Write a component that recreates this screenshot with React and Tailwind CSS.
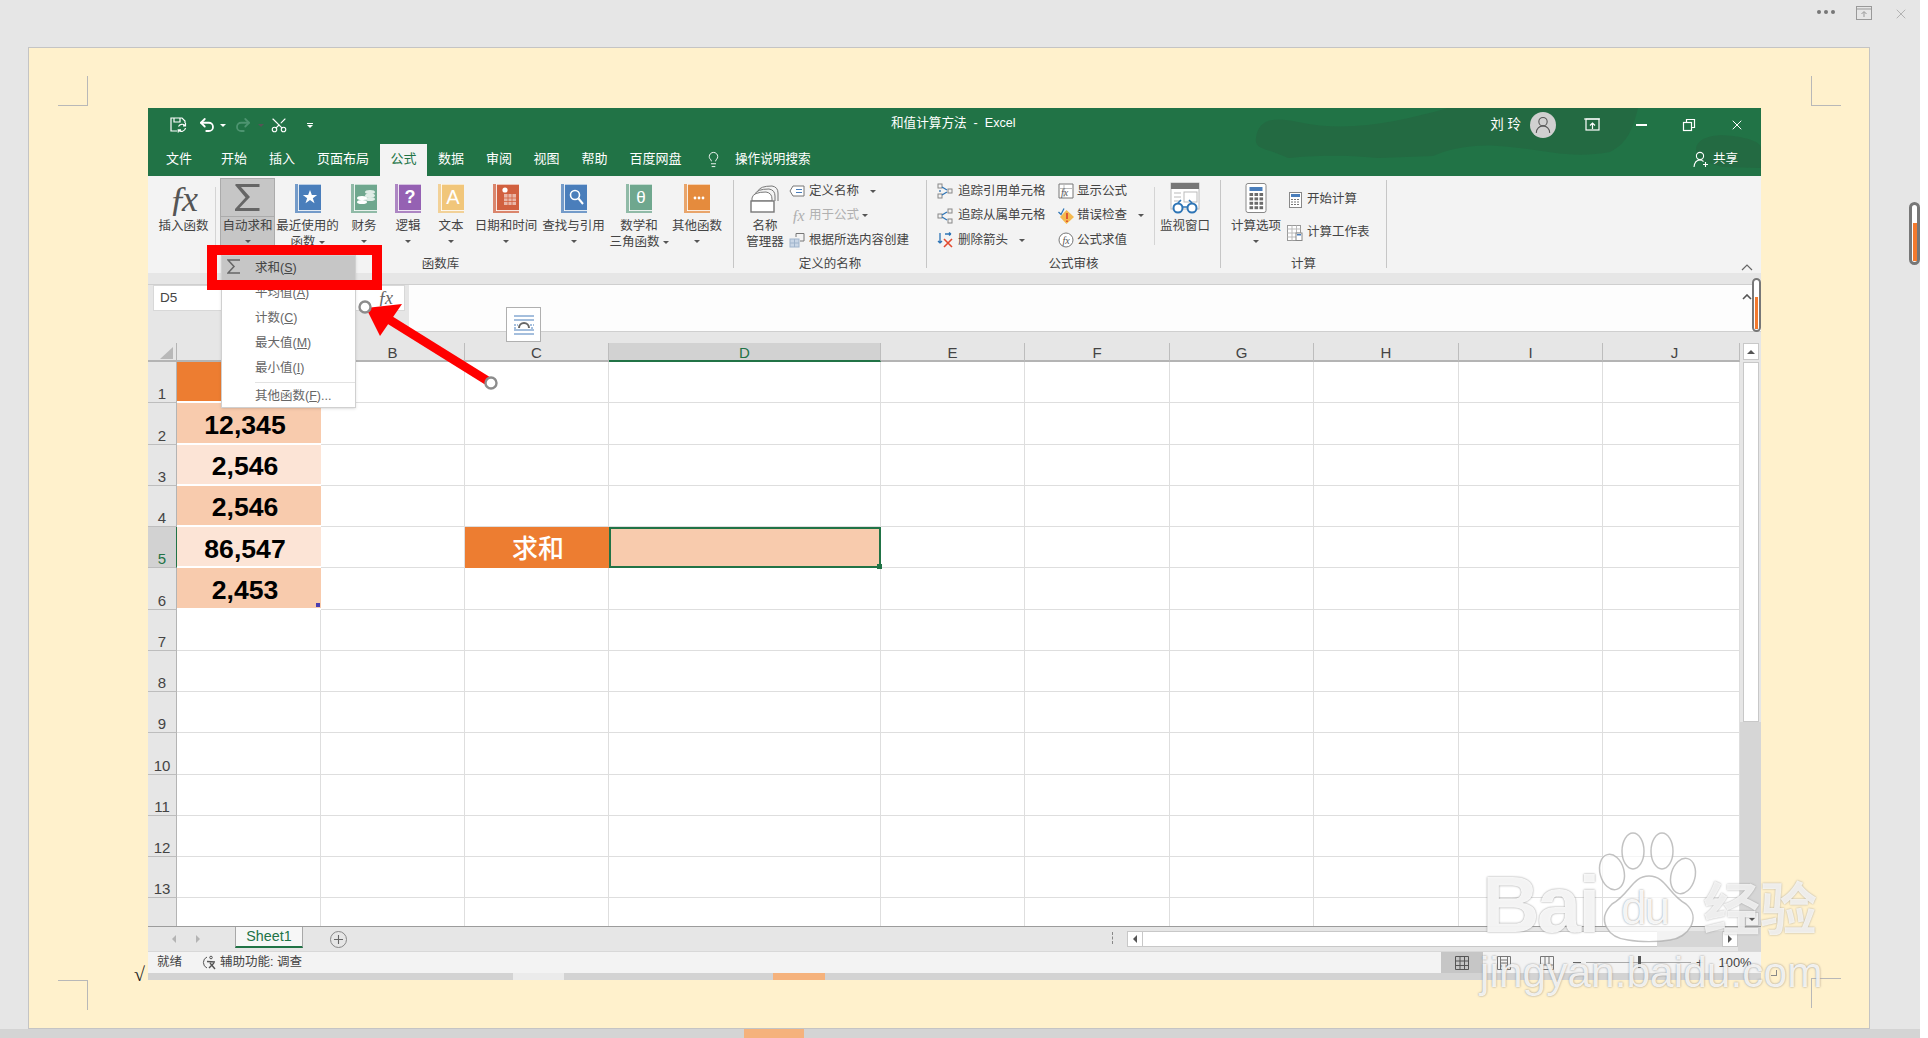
import { Undo2, Redo2, Scissors, Lightbulb, X, UserRound } from 'lucide-react';

const columns = [
    { name: 'A', w: 'w-[144px]' },
    { name: 'B', w: 'w-[144px]' },
    { name: 'C', w: 'w-[144px]' },
    { name: 'D', w: 'w-[272px]', selected: true },
    { name: 'E', w: 'w-[144px]' },
    { name: 'F', w: 'w-[145px]' },
    { name: 'G', w: 'w-[144px]' },
    { name: 'H', w: 'w-[145px]' },
    { name: 'I', w: 'w-[144px]' },
    { name: 'J', w: 'w-[137px] pl-[7px]' },
];

const rows = [
    { n: 1, a: '', bg: 'bg-[#ed7d31]' },
    { n: 2, a: '12,345', bg: 'bg-[#f8cbad]' },
    { n: 3, a: '2,546', bg: 'bg-[#fce4d6]' },
    { n: 4, a: '2,546', bg: 'bg-[#f8cbad]' },
    { n: 5, a: '86,547', bg: 'bg-[#fce4d6]', selected: true },
    { n: 6, a: '2,453', bg: 'bg-[#f8cbad]' },
    { n: 7 }, { n: 8 }, { n: 9 }, { n: 10 }, { n: 11 }, { n: 12 }, { n: 13 }, { n: 14 },
];

const tabs = [
    { label: '文件', w: 'w-[62px]' },
    { label: '开始', w: 'w-[48px]' },
    { label: '插入', w: 'w-[48px]' },
    { label: '页面布局', w: 'w-[74px]' },
    { label: '公式', w: 'w-[47px]', active: true },
    { label: '数据', w: 'w-[48px]' },
    { label: '审阅', w: 'w-[48px]' },
    { label: '视图', w: 'w-[47px]' },
    { label: '帮助', w: 'w-[49px]' },
    { label: '百度网盘', w: 'w-[73px]' },
];

function Caret({ className = '' }) {
    return <span className={`inline-block w-0 h-0 border-x-[3px] border-x-transparent border-t-[3px] border-t-[#555] ${className}`} />;
}

function Book({ color, children }) {
    return (
        <svg width="26" height="29" viewBox="0 0 26 29">
            <rect x="0" y="0" width="26" height="29" fill={color} opacity="0.75" />
            <rect x="4" y="1" width="22" height="25" fill={color} />
            <rect x="3" y="0" width="1" height="27" fill="#fff" opacity="0.8" />
            <rect x="3" y="26" width="23" height="1" fill="#fff" opacity="0.8" />
            <rect x="3" y="0" width="23" height="1" fill="#fff" opacity="0.5" />
            {children}
        </svg>
    );
}

function RibbonButton({ w, icon, lines, caret = true, inlineCaret = false, pad = '' }) {
    return (
        <div className={`${w} ${pad} shrink-0 flex flex-col items-center pt-[8px]`}>
            <div className="h-[29px] flex items-center justify-center">{icon}</div>
            <div className="mt-[5px] text-center text-[12.5px] leading-[16px] whitespace-nowrap text-[#444]">
                {lines.map((line, i) => (
                    <div key={line}>
                        {line}
                        {inlineCaret && i === lines.length - 1 && <Caret className="ml-[3px] mb-[2px]" />}
                    </div>
                ))}
            </div>
            {caret && <Caret className="mt-[6px]" />}
        </div>
    );
}

function SmallRow({ icon, label, box = 'w-[18px]', gap = 'ml-[3px]', caret, dim, h = 'h-[24.5px]' }) {
    return (
        <div className={`${h} flex items-center text-[12.5px] whitespace-nowrap ${dim ? 'text-[#b0b0b0]' : 'text-[#444]'}`}>
            <div className={`${box} flex justify-center shrink-0`}>{icon}</div>
            <span className={gap}>{label}</span>
            {caret && <Caret className={caret} />}
        </div>
    );
}

function GroupLabel({ children }) {
    return <div className="h-[16px] text-center text-[12.5px] leading-[16px] text-[#444] whitespace-nowrap">{children}</div>;
}

function Sep({ short }) {
    return <div className={short ? 'w-px h-[58px] mt-[11px] bg-[#d4d4d4] shrink-0' : 'w-px h-[88px] mt-[4px] bg-[#c6c6c6] shrink-0'} />;
}

function Icon16({ children }) {
    return <svg width="16" height="16" viewBox="0 0 16 16" fill="none">{children}</svg>;
}

function CalcKeys() {
    const keys = [];
    for (let r = 0; r < 4; r++) {
        for (let c = 0; c < 3; c++) {
            keys.push(<rect key={`${r}${c}`} x={4.5 + c * 5} y={10 + r * 4.4} width="3.6" height="3" fill="#6b6b6b" />);
        }
    }
    return keys;
}

function RibbonBar() {
    return (
        <div className="h-[97px] bg-[#f3f3f3] flex items-start relative">
            {/* 函数库 */}
            <div className="w-[585px] shrink-0 flex-none">
                <div className="h-[80px] flex items-start">
                    <div className="w-[67px] pl-[4px] shrink-0 flex flex-col items-center pt-[8px]">
                        <div className="h-[29px] flex items-center font-['Liberation_Serif',serif] italic text-[36px] tracking-[-5px] pr-[5px] leading-none text-[#555]">ƒx</div>
                        <div className="mt-[5px] text-[12.5px] leading-[16px] text-[#444]">插入函数</div>
                    </div>
                    <Sep short />
                    <div className="w-[4px] shrink-0" />
                    <div className="w-[55px] h-[77px] mt-[2px] shrink-0 flex flex-col border border-[#ababab] bg-[#c6c6c6]">
                        <div className="h-[38px] flex items-center justify-center border-b border-[#ababab]">
                            <svg width="25" height="27" viewBox="0 0 25 27">
                                <path d="M1 0 H24.5 V3 H6 L15 13 L4.5 24 H24.5 V27 H0 V25 L10.5 13.5 L0 1z" fill="#666" />
                            </svg>
                        </div>
                        <div className="text-center text-[12.5px] leading-[16px] pt-[1px] whitespace-nowrap text-[#444]">自动求和</div>
                        <div className="flex justify-center mt-[6px]"><Caret /></div>
                    </div>
                    <RibbonButton w="w-[65px]" caret={false} inlineCaret lines={['最近使用的', '函数']} icon={
                        <Book color="#4a7ebb"><path d="M15 5 l1.9 5.2 h5.4 l-4.4 3.2 1.7 5.3 -4.6 -3.3 -4.6 3.3 1.7 -5.3 -4.4 -3.2 h5.4z" fill="#fff" transform="translate(0.3 1) scale(0.98)" /></Book>
                    } />
                    <RibbonButton w="w-[48px]" lines={['财务']} icon={
                        <Book color="#6fa78e">
                            <ellipse cx="19" cy="8" rx="5" ry="2" fill="#dfece6" />
                            <ellipse cx="19" cy="11.5" rx="5" ry="2" fill="#dfece6" />
                            <ellipse cx="19" cy="15" rx="5" ry="2" fill="#dfece6" />
                            <ellipse cx="11" cy="14" rx="5" ry="2" fill="#fff" />
                            <ellipse cx="11" cy="18" rx="5" ry="2" fill="#fff" />
                        </Book>
                    } />
                    <RibbonButton w="w-[40px]" lines={['逻辑']} icon={
                        <Book color="#9561b3"><text x="15" y="19" textAnchor="middle" fontSize="18" fontWeight="700" fill="#fff" fontFamily="Liberation Sans">?</text></Book>
                    } />
                    <RibbonButton w="w-[46px]" lines={['文本']} icon={
                        <Book color="#f1c67a"><text x="15" y="20" textAnchor="middle" fontSize="20" fontWeight="400" fill="#fff" fontFamily="Liberation Sans">A</text></Book>
                    } />
                    <RibbonButton w="w-[64px]" lines={['日期和时间']} icon={
                        <Book color="#d1603f">
                            <circle cx="12" cy="6" r="2.6" fill="#fff" />
                            <rect x="11" y="10" width="12" height="11" fill="#fff" opacity="0.55" />
                            <path d="M11 14h12M11 17.5h12M15 10v11M19 10v11" stroke="#d1603f" strokeWidth="0.8" />
                        </Book>
                    } />
                    <RibbonButton w="w-[71px]" lines={['查找与引用']} icon={
                        <Book color="#4a7ebb">
                            <circle cx="14" cy="11" r="4.5" stroke="#fff" strokeWidth="1.6" fill="none" />
                            <path d="M17.5 14.5 L22 20" stroke="#fff" strokeWidth="2" />
                        </Book>
                    } />
                    <RibbonButton w="w-[60px]" caret={false} inlineCaret lines={['数学和', '三角函数']} icon={
                        <Book color="#6fa78e"><text x="15" y="19" textAnchor="middle" fontSize="17" fill="#fff" fontFamily="Liberation Sans">θ</text></Book>
                    } />
                    <RibbonButton w="w-[56px]" lines={['其他函数']} icon={
                        <Book color="#e58b3d">
                            <circle cx="11" cy="14" r="1.4" fill="#fff" />
                            <circle cx="15" cy="14" r="1.4" fill="#fff" />
                            <circle cx="19" cy="14" r="1.4" fill="#fff" />
                        </Book>
                    } />
                </div>
                <GroupLabel>函数库</GroupLabel>
            </div>
            <Sep />

            {/* 定义的名称 */}
            <div className="w-[192px] shrink-0">
                <div className="h-[80px] flex items-start">
                    <div className="w-[54px] pl-[8px] shrink-0 flex flex-col items-center pt-[8px]">
                        <div className="h-[29px] flex items-center">
                            <svg width="30" height="28" viewBox="0 0 30 28" fill="none" stroke="#777">
                                <path d="M8 6 Q10 1 22 1 Q28 2 28 8 V16" />
                                <path d="M5 9 Q7 4 19 4 Q25 5 25 11 V16" fill="#f3f3f3" />
                                <path d="M2 13 Q3 7 16 7 Q22 8 22 14 V16 H2z" fill="#fff" />
                                <rect x="1" y="16" width="23" height="11" fill="#fff" strokeWidth="1.4" />
                            </svg>
                        </div>
                        <div className="mt-[5px] text-center text-[12.5px] leading-[16px] text-[#444] whitespace-nowrap">
                            <div>名称</div>
                            <div>管理器</div>
                        </div>
                    </div>
                    <div className="pt-[3px]">
                        <SmallRow label="定义名称" caret="ml-[11px]" icon={
                            <Icon16>
                                <path d="M4 3 H15 V13 H4 L1 8z" stroke="#777" fill="#fff" />
                                <path d="M7 6.5h6M7 9.5h6" stroke="#4a7ebb" />
                            </Icon16>
                        } />
                        <SmallRow dim label="用于公式" caret="ml-[3px]" icon={
                            <span className="font-['Liberation_Serif',serif] italic text-[16px] tracking-[-2px] leading-none text-[#b0b0b0]">ƒx</span>
                        } />
                        <SmallRow label="根据所选内容创建" icon={
                            <Icon16>
                                <rect x="1" y="7" width="9" height="8" fill="#c9d6e6" stroke="#9fb4cc" />
                                <path d="M5.5 7v8M1 11h9" stroke="#9fb4cc" />
                                <path d="M7 5 V1.5 H15 V9 H11" stroke="#777" />
                            </Icon16>
                        } />
                    </div>
                </div>
                <GroupLabel>定义的名称</GroupLabel>
            </div>
            <Sep />

            {/* 公式审核 */}
            <div className="w-[293px] shrink-0">
                <div className="h-[80px] flex items-start">
                    <div className="w-[130px] shrink-0 pl-[9px] pt-[3px]">
                        <SmallRow gap="ml-[4px]" label="追踪引用单元格" icon={
                            <Icon16>
                                <rect x="1" y="1" width="4" height="4" stroke="#888" />
                                <rect x="1" y="11" width="4" height="4" stroke="#888" />
                                <rect x="11" y="6" width="4" height="4" stroke="#888" />
                                <path d="M5 4 L10 7 M5 12 L10 9 M3 7v2" stroke="#2e75b6" strokeWidth="1.3" />
                            </Icon16>
                        } />
                        <SmallRow gap="ml-[4px]" label="追踪从属单元格" icon={
                            <Icon16>
                                <rect x="1" y="6" width="4" height="4" stroke="#888" />
                                <rect x="11" y="1" width="4" height="4" stroke="#888" />
                                <rect x="11" y="11" width="4" height="4" stroke="#888" />
                                <path d="M5 7 L10 4 M5 9 L10 12" stroke="#2e75b6" strokeWidth="1.3" />
                            </Icon16>
                        } />
                        <SmallRow gap="ml-[4px]" label="删除箭头" caret="ml-[11px]" icon={
                            <Icon16>
                                <path d="M3 1v10M3 11l-2-2M3 11l2-2M8 2h6M14 2l-2-1.5M14 2l-2 1.5" stroke="#2e75b6" strokeWidth="1.3" />
                                <path d="M7 7 L15 15 M15 7 L7 15" stroke="#e2492f" strokeWidth="1.6" />
                            </Icon16>
                        } />
                    </div>
                    <div className="w-[97px] shrink-0 pt-[3px] flex items-start">
                        <div>
                            <SmallRow gap="ml-[2px]" label="显示公式" icon={
                                <Icon16>
                                    <path d="M1 1 H15 V15 H1z" stroke="#777" fill="#fff" />
                                    <path d="M1 5.5h14M6 1v14" stroke="#bbb" />
                                    <text x="3" y="13" fontSize="10" fontStyle="italic" fill="#555" fontFamily="Liberation Serif">fx</text>
                                </Icon16>
                            } />
                            <SmallRow gap="ml-[2px]" label="错误检查" caret="ml-[11px]" icon={
                                <Icon16>
                                    <path d="M8.5 2 L16 9 L8.5 16 L2 9z" fill="#f5b94e" />
                                    <path d="M9 5v6M9 12.5v1.5" stroke="#d9412b" strokeWidth="1.6" />
                                    <path d="M0.5 4 L3 6.5 L6 0.5" stroke="#2e75b6" strokeWidth="1.3" />
                                </Icon16>
                            } />
                            <SmallRow gap="ml-[2px]" label="公式求值" icon={
                                <Icon16>
                                    <circle cx="8" cy="8" r="7" stroke="#777" fill="#fff" />
                                    <text x="4.5" y="11.5" fontSize="10" fontStyle="italic" fill="#555" fontFamily="Liberation Serif">fx</text>
                                </Icon16>
                            } />
                        </div>
                    </div>
                    <Sep short />
                    <div className="w-[65px] pr-[5px] shrink-0 flex flex-col items-center pt-[7px]">
                        <div className="h-[30px] flex items-center">
                            <svg width="30" height="32" viewBox="0 0 30 32" fill="none">
                                <rect x="1" y="1" width="28" height="26" fill="#fff" stroke="#bbb" />
                                <rect x="1" y="1" width="28" height="6" fill="#777" />
                                <rect x="14" y="10" width="13" height="10" stroke="#bbb" />
                                <path d="M4 11h7M4 15h7M4 19h7" stroke="#bbb" />
                                <circle cx="8" cy="26" r="4.5" stroke="#2e75b6" strokeWidth="2" fill="#fff" />
                                <circle cx="22" cy="26" r="4.5" stroke="#2e75b6" strokeWidth="2" fill="#fff" />
                                <path d="M12 25 h6 M8 21 L11 18 M22 21 L19 18" stroke="#2e75b6" strokeWidth="1.6" />
                            </svg>
                        </div>
                        <div className="mt-[5px] text-[12.5px] leading-[16px] text-[#444] whitespace-nowrap">监视窗口</div>
                    </div>
                </div>
                <GroupLabel>公式审核</GroupLabel>
            </div>
            <Sep />

            {/* 计算 */}
            <div className="w-[165px] shrink-0">
                <div className="h-[80px] flex items-start">
                    <div className="w-[66px] pl-[4px] shrink-0 flex flex-col items-center pt-[7px]">
                        <div className="h-[30px] flex items-center">
                            <svg width="22" height="30" viewBox="0 0 22 30" fill="none">
                                <rect x="1" y="0.5" width="20" height="29" rx="2" fill="#fff" stroke="#888" />
                                <rect x="4.5" y="4" width="13" height="4" fill="#4a7ebb" />
                                <CalcKeys />
                            </svg>
                        </div>
                        <div className="mt-[5px] text-[12.5px] leading-[16px] text-[#444] whitespace-nowrap">计算选项</div>
                        <Caret className="mt-[6px]" />
                    </div>
                    <div className="pt-[7px]">
                        <SmallRow h="h-[33px]" box="w-[16px]" gap="ml-[4px]" label="开始计算" icon={
                            <svg width="13" height="16" viewBox="0 0 13 16" fill="none">
                                <rect x="0.5" y="0.5" width="12" height="15" fill="#fff" stroke="#888" />
                                <rect x="2" y="2" width="9" height="3" fill="#4a7ebb" />
                                <path d="M2 7.5h9M2 10h9M2 12.5h9" stroke="#777" strokeDasharray="2 1" />
                            </svg>
                        } />
                        <SmallRow h="h-[33px]" box="w-[16px]" gap="ml-[4px]" label="计算工作表" icon={
                            <svg width="16" height="16" viewBox="0 0 16 16" fill="none">
                                <rect x="0.5" y="0.5" width="13" height="15" fill="#fff" stroke="#999" />
                                <path d="M0.5 4h13M0.5 8h13M0.5 12h13M5 0.5v15M9.5 0.5v15" stroke="#bbb" />
                                <rect x="9" y="8" width="6" height="7.5" fill="#fff" stroke="#888" />
                                <rect x="10" y="9" width="4" height="1.5" fill="#4a7ebb" />
                            </svg>
                        } />
                    </div>
                </div>
                <GroupLabel>计算</GroupLabel>
            </div>
            <Sep />

            <svg width="12" height="7" viewBox="0 0 12 7" fill="none" className="ml-auto mr-[8px] mt-[88px]">
                <path d="M1 6 L6 1 L11 6" stroke="#666" strokeWidth="1.2" />
            </svg>
        </div>
    );
}

function GreenHeader() {
    return (
        <div className="h-[68px] bg-[#217346] relative text-white overflow-hidden">
            <svg className="absolute inset-0" width="1613" height="68" viewBox="0 0 1613 68">
                <path d="M1108 30 C1110 12 1125 8 1150 14 C1200 25 1250 14 1300 0 L1490 0 C1485 20 1480 35 1462 44 C1420 52 1390 40 1350 38 C1320 36 1300 42 1285 48 L1230 50 C1190 46 1160 48 1140 50 C1120 40 1106 42 1108 30Z" fill="#236a42" />
                <path d="M1548 42 C1548 30 1565 25 1585 28 C1600 30 1613 34 1613 40 L1613 60 L1575 59 C1560 55 1548 52 1548 42Z" fill="#236a42" />
            </svg>
            <div className="h-[34px] flex items-center pl-[21px] relative">
                <svg width="18" height="18" viewBox="0 0 18 18" fill="none" stroke="#fff" strokeWidth="1.2">
                    <path d="M8 15 H2 V2 H13 L16 5 V7" />
                    <path d="M5 2 V6 H11 V2" />
                    <path d="M16.5 12 A4 4 0 0 1 9.5 14 M9.5 10.5 A4 4 0 0 1 16 9.5 M16.5 7 V9.8 H14 M9.2 16.5 V13.8 H12" />
                </svg>
                <Undo2 size={18} strokeWidth={2.4} className="ml-[11px]" />
                <Caret className="ml-[4px] border-t-white" />
                <Redo2 size={18} strokeWidth={2.4} className="ml-[8px] text-[#4d9470]" />
                <Caret className="ml-[6px] border-t-[#4d9470]" />
                <Scissors size={18} strokeWidth={1.5} className="ml-[6px] -rotate-90" />
                <div className="ml-[19px] flex flex-col items-center gap-[1px]">
                    <div className="w-[6px] h-px bg-white" />
                    <Caret className="border-t-white" />
                </div>
                <div className="ml-[578px] mb-[4px] text-[12.6px] whitespace-nowrap">和值计算方法&nbsp; - &nbsp;Excel</div>
                <div className="ml-auto pr-[16px] flex items-center">
                    <span className="text-[13.5px]">刘 玲</span>
                    <div className="ml-[9px] w-[26px] h-[26px] rounded-full bg-[#d0d0d0] flex items-center justify-center">
                        <UserRound size={20} strokeWidth={1.3} className="text-[#555]" />
                    </div>
                    <svg width="18" height="14" viewBox="0 0 18 14" fill="none" stroke="#fff" strokeWidth="1.2" className="ml-[27px]">
                        <rect x="3" y="1" width="13" height="11" />
                        <path d="M1 1h16M9.5 11V5M7 7.5l2.5-2.5 2.5 2.5" />
                    </svg>
                    <div className="ml-[32px] w-[16px] flex justify-center"><div className="w-[11px] h-[1.5px] bg-white" /></div>
                    <svg width="16" height="16" viewBox="0 0 16 16" fill="none" stroke="#fff" strokeWidth="1.2" className="ml-[32px]">
                        <rect x="2.5" y="5.5" width="8" height="8" />
                        <path d="M5.5 5 V2.5 H13.5 V10.5 H11" />
                    </svg>
                    <X size={16} strokeWidth={1.5} className="ml-[32px]" />
                </div>
            </div>
            <div className="h-[34px] flex items-stretch relative">
                {tabs.map((tab) => (
                    <div
                        key={tab.label}
                        className={`${tab.w} shrink-0 flex items-center justify-center text-[13px] ${tab.active ? 'bg-[#f3f3f3] text-[#217346] mt-[2px] pb-[2px]' : ''}`}
                    >
                        {tab.label}
                    </div>
                ))}
                <Lightbulb size={17} strokeWidth={1.3} className="ml-[13px] self-center" />
                <span className="ml-[13px] self-center text-[12.6px] whitespace-nowrap">操作说明搜索</span>
                <div className="ml-auto pr-[23px] flex items-center text-[12.5px]">
                    <svg width="17" height="17" viewBox="0 0 17 17" fill="none" stroke="#fff" strokeWidth="1.1" className="mr-[3px]">
                        <circle cx="7" cy="5" r="3.6" />
                        <path d="M1 16 C1.5 11 4 9 7 9 C8.5 9 9.5 9.5 10.5 10.5 M12.5 11v5M10 13.5h5" />
                    </svg>
                    共享
                </div>
            </div>
        </div>
    );
}

function FormulaBar() {
    return (
        <div className="h-[59px] bg-[#e6e6e6] border-t border-[#cfcfcf] flex items-start pl-[5px]">
            <div className="w-[252px] h-[26px] bg-white border border-[#d8d8d8] flex items-center justify-between text-[13.5px] text-[#444] pl-[6px] pr-[13px]">
                <span>D5</span>
                <span className="font-['Liberation_Serif',serif] italic text-[18px] tracking-[-2px] text-[#666]">ƒx</span>
            </div>
            <div className="ml-[4px] flex-1 h-[47px] bg-[#fdfdfd] border-b border-[#cfcfcf] flex justify-end pt-[9px] pr-[9px]">
                <svg width="10" height="6" viewBox="0 0 10 6" fill="none"><path d="M1 5 L5 1 L9 5" stroke="#555" strokeWidth="1.6" /></svg>
            </div>
        </div>
    );
}

function ColumnHeader() {
    return (
        <div className="h-[19px] flex bg-[#e6e6e6]">
            <div className="w-[29px] border-b-2 border-[#b4b4b4] border-r border-r-[#b4b4b4] shrink-0 flex items-end justify-end pr-[3px] pb-[1px]">
                <div className="w-0 h-0 border-l-[13px] border-l-transparent border-b-[12px] border-b-[#b8b8b8]" />
            </div>
            {columns.map((col) => (
                <div
                    key={col.name}
                    className={`${col.w} shrink-0 flex items-center justify-center pt-[3px] text-[15px] border-r border-[#bdbdbd] ${
                        col.selected ? 'bg-[#d2d2d2] text-[#217346] border-b-2 border-b-[#217346]' : 'text-[#444] border-b-2 border-b-[#b4b4b4]'
                    }`}
                >
                    {col.name}
                </div>
            ))}
            <div className="flex-1 pl-[3px]">
                <div className="w-[16px] h-[17px] bg-white border border-[#c8c8c8] flex items-center justify-center">
                    <div className="w-0 h-0 border-x-[4px] border-x-transparent border-b-[4px] border-b-[#555]" />
                </div>
            </div>
        </div>
    );
}

function Sheet() {
    return (
        <div className="h-[564px] flex overflow-hidden">
            <div className="w-[1592px] shrink-0 border-r border-[#9f9f9f]">
                {rows.map((row) => (
                    <div key={row.n} className="h-[41.25px] flex">
                        <div
                            className={`w-[29px] shrink-0 flex items-end justify-center text-[15px] leading-[16px] border-b border-[#bdbdbd] border-r ${
                                row.selected ? 'bg-[#d2d2d2] text-[#217346] border-r-[#217346]' : 'bg-[#e6e6e6] text-[#444] border-r-[#b4b4b4]'
                            }`}
                        >
                            {row.n}
                        </div>
                        <div
                            className={`w-[144px] shrink-0 relative flex items-center justify-center pt-[6px] pr-[8px] text-[26.6px] font-bold text-black ${
                                row.bg ? `${row.bg} border-b-2 border-white` : 'border-b border-r border-[#dedede]'
                            }`}
                        >
                            {row.a}
                            {row.n === 6 && <div className="absolute right-[1px] bottom-[1px] w-[4px] h-[4px] bg-[#4a3fb0]" />}
                        </div>
                        <div className="w-[144px] shrink-0 border-b border-r border-[#dedede]" />
                        {row.n === 5 ? (
                            <div className="w-[144px] shrink-0 bg-[#ed7d31] flex items-center justify-center pt-[3px] pl-[2px] text-[26px] font-medium text-white">求和</div>
                        ) : (
                            <div className="w-[144px] shrink-0 border-b border-r border-[#dedede]" />
                        )}
                        {row.n === 5 ? (
                            <div className="w-[272px] shrink-0 bg-[#f8cbad] border-2 border-[#217346] relative">
                                <div className="absolute -right-[3px] -bottom-[3px] w-[5px] h-[5px] bg-[#217346]" />
                            </div>
                        ) : (
                            <div className="w-[272px] shrink-0 border-b border-r border-[#dedede]" />
                        )}
                        {columns.slice(4).map((col) => (
                            <div key={col.name} className={`${col.w} shrink-0 border-b border-r border-[#dedede]`} />
                        ))}
                    </div>
                ))}
            </div>
            <div className="flex-1 flex flex-col">
                <div className="h-[360px] bg-[#e6e6e6] pl-[3px]">
                    <div className="w-[16px] h-full bg-white border border-[#c8c8c8]" />
                </div>
                <div className="flex-1 bg-[#d6d6d6] pl-[5px] flex flex-col justify-end">
                    <div className="w-[14px] h-[14px] bg-[#f0f0f0] border border-[#c8c8c8] flex items-center justify-center">
                        <Caret />
                    </div>
                </div>
            </div>
        </div>
    );
}

function BottomBars() {
    return (
        <>
            <div className="h-[25px] bg-[#e6e6e6] border-t border-[#9c9c9c] flex items-start">
                <div className="w-[87px] h-full flex items-center pl-[24px] gap-[20px] shrink-0">
                    <div className="w-0 h-0 border-y-[4px] border-y-transparent border-r-[4px] border-r-[#b4b4b4]" />
                    <div className="w-0 h-0 border-y-[4px] border-y-transparent border-l-[4px] border-l-[#b4b4b4]" />
                </div>
                <div className="w-[68px] h-[21px] bg-[#f7f7f7] border-x border-b-2 border-x-[#a8a8a8] border-b-[#217346] text-[14.3px] text-[#217346] flex items-center justify-center shrink-0">Sheet1</div>
                <div className="ml-[27px] mt-[4px] w-[17px] h-[17px] rounded-full border border-[#888] flex items-center justify-center text-[#666]">
                    <svg width="11" height="11" viewBox="0 0 11 11"><path d="M5.5 1v9M1 5.5h9" stroke="#666" strokeWidth="1.1" /></svg>
                </div>
                <div className="ml-[765px] mt-[5px] w-px h-[12px] border-l border-dashed border-[#888]" />
                <div className="ml-[14px] mt-[4px] w-[611px] h-[16px] bg-[#d6d6d6] flex shrink-0">
                    <div className="w-[16px] h-full bg-white border border-[#c8c8c8] flex items-center justify-center">
                        <div className="w-0 h-0 border-y-[4px] border-y-transparent border-r-[4px] border-r-[#555]" />
                    </div>
                    <div className="w-[514px] h-full bg-white border-y border-[#c8c8c8]" />
                    <div className="flex-1" />
                    <div className="w-[16px] h-full bg-white border border-[#c8c8c8] flex items-center justify-center">
                        <div className="w-0 h-0 border-y-[4px] border-y-transparent border-l-[4px] border-l-[#555]" />
                    </div>
                </div>
                <div className="flex-1 h-full bg-[#d6d6d6]" />
            </div>
            <div className="h-[22px] bg-[#f3f3f3] border-t border-[#d8d8d8] flex items-center text-[12.5px] text-[#444]">
                <span className="ml-[9px]">就绪</span>
                <svg width="15" height="15" viewBox="0 0 15 15" fill="none" className="ml-[20px]" stroke="#555">
                    <path d="M5 2 A6 6 0 0 0 5 13" />
                    <circle cx="9" cy="2.5" r="1.3" />
                    <path d="M5 6.5 L13 7 M7 13 L12 8 M8 8 L13 14" strokeWidth="1.4" />
                </svg>
                <span className="ml-[3px]">辅助功能: 调查</span>
                <div className="ml-[1139px] w-[42px] h-full bg-[#c6c6c6] flex items-center justify-center shrink-0">
                    <svg width="14" height="14" viewBox="0 0 14 14" fill="none" stroke="#555"><path d="M.5.5h13v13H.5zM.5 5h13M.5 9.5h13M5 .5v13M9.5 .5v13" /></svg>
                </div>
                <svg width="14" height="14" viewBox="0 0 14 14" fill="none" stroke="#777" className="ml-[14px]"><path d="M.5.5h13v13H.5zM3.5.5v13M10.5.5v13M3.5 4h7M3.5 7h7M3.5 10h7" /></svg>
                <svg width="14" height="14" viewBox="0 0 14 14" fill="none" stroke="#777" className="ml-[29px]"><path d="M.5.5h13v13H.5zM.5 9h13M5 .5v8.5M9 .5v8.5" /></svg>
                <span className="ml-[19px] w-[8px] h-px bg-[#666]" />
                <div className="ml-[5px] w-[105px] h-px bg-[#aaa] relative">
                    <div className="absolute left-[52px] -top-[6px] w-[3px] h-[12px] bg-[#555]" />
                </div>
                <span className="ml-[5px] text-[13px]">+</span>
                <span className="ml-[15px] text-[12.9px]">100%</span>
            </div>
            <div className="h-[7px] bg-[#d3d3d3] flex">
                <div className="ml-[365px] w-[51px] bg-[#ebebeb]" />
                <div className="ml-[209px] w-[52px] bg-[#f5b27c]" />
            </div>
        </>
    );
}

function Overlays() {
    const items = [
        { label: '平均值', key: 'A' },
        { label: '计数', key: 'C' },
        { label: '最大值', key: 'M' },
        { label: '最小值', key: 'I' },
    ];
    return (
        <>
            {/* dropdown */}
            <div className="absolute left-[221px] top-[255px] w-[135px] h-[153px] bg-white border border-[#d0d0d0] shadow-sm text-[12.5px] text-[#666]">
                <div className="h-[24px] mb-px bg-[#c6c6c6] flex items-center pl-[33px] relative text-[#444] w-[133px]">
                    <svg width="14" height="15" viewBox="0 0 14 15" fill="none" className="absolute left-[5px] top-[3px]">
                        <path d="M13 1 H1 L7 7.5 L1 14 H13" stroke="#666" strokeWidth="1.5" />
                    </svg>
                    求和(<u>S</u>)
                </div>
                {items.map((item) => (
                    <div key={item.key} className="h-[25px] flex items-center pl-[33px]">
                        {item.label}(<u>{item.key}</u>)
                    </div>
                ))}
                <div className="ml-[33px] mt-[1px] h-px bg-[#e2e2e2]" />
                <div className="h-[26px] flex items-center pl-[33px]">其他函数(<u>F</u>)...</div>
            </div>
            {/* red annotation */}
            <div className="absolute left-[207px] top-[245px] w-[175px] h-[45px] border-[10px] border-[#ff0000]" />
            <svg className="absolute left-[340px] top-[290px]" width="170" height="110" viewBox="0 0 170 110" fill="none">
                <path d="M151 93 L45 27" stroke="#ff0000" strokeWidth="9" />
                <path d="M26 18 L62 14 L40 46z" fill="#ff0000" />
                <circle cx="25" cy="17" r="5.5" fill="#fff" stroke="#8c8c8c" strokeWidth="2.4" />
                <circle cx="151" cy="93" r="5.5" fill="#fff" stroke="#8c8c8c" strokeWidth="2.4" />
            </svg>
            {/* floating layout button */}
            <div className="absolute left-[506px] top-[307px] w-[35px] h-[35px] bg-white border border-[#b0b0b0] flex items-center justify-center">
                <svg width="20" height="20" viewBox="0 0 20 20" fill="none">
                    <path d="M0 1h20M0 5h20M0 15h20M0 19h20" stroke="#4a7ebb" />
                    <path d="M0 10h4M16 10h4M0 13h3M17 13h3" stroke="#4a7ebb" strokeDasharray="2 1" />
                    <path d="M5 13 A5 5 0 0 1 15 13" stroke="#666" strokeWidth="2" />
                </svg>
            </div>
            {/* excel window mini scroller */}
            <div className="absolute left-[1752px] top-[278px] w-[9px] h-[54px] rounded-full border-2 border-[#777] bg-white flex items-end justify-center pb-[1px]">
                <div className="w-[3px] h-[32px] bg-[#f47a2e]" />
            </div>
            {/* status corner mark */}
            <div className="absolute left-[1771px] top-[970px] w-[6px] h-[6px] border-r border-b border-[#888]" />
            {/* watermark */}
            <div className="absolute left-[1482px] top-[865px] text-[80px] leading-[80px] font-bold text-white/90 [text-shadow:0_0_2px_rgba(110,110,110,0.8)] tracking-[-3px]">Bai</div>
            <svg className="absolute left-[1596px] top-[832px]" width="106" height="112" viewBox="0 0 106 112" fill="#ffffff" fillOpacity="0.7" stroke="#a8a8a8" strokeOpacity="0.7" strokeWidth="1.5">
                <ellipse cx="16" cy="40" rx="12" ry="18" transform="rotate(-15 16 40)" />
                <ellipse cx="37" cy="19" rx="11" ry="18" />
                <ellipse cx="66" cy="19" rx="11" ry="18" />
                <ellipse cx="87" cy="44" rx="12" ry="18" transform="rotate(15 87 44)" />
                <path d="M53 44 C70 44 72 62 90 72 C106 86 92 106 74 108 C62 110 44 110 32 108 C12 106 0 88 16 72 C34 62 36 44 53 44Z" />
            </svg>
            <div className="absolute left-[1621px] top-[880px] text-[46px] leading-[56px] text-white/90 [text-shadow:0_0_2px_rgba(110,110,110,0.8)] tracking-[-2px]">du</div>
            <div className="absolute left-[1703px] top-[875px] text-[57px] leading-[70px] font-bold text-white/80 [text-shadow:0_0_2px_rgba(110,110,110,0.6)] whitespace-nowrap">经验</div>
            <div className="absolute left-[1480px] top-[948px] text-[42.5px] leading-[50px] text-white/85 [text-shadow:0_0_2px_rgba(110,110,110,0.8)] whitespace-nowrap">jingyan.baidu.com</div>
        </>
    );
}

function CropMark({ className }) {
    return <div className={`absolute w-[30px] h-[30px] border-[#b8b8b8] ${className}`} />;
}

export default function App() {
    return (
        <div className="w-[1928px] h-[1038px] relative overflow-hidden bg-white font-['Liberation_Sans','Noto_Sans_CJK_SC',sans-serif]">
            <div className="w-[1920px] h-full bg-[#e6e6e6]">
                {/* window buttons */}
                <div className="h-[47px] flex items-start justify-end pt-[6px] pr-[11px]">
                    <div className="flex items-center gap-[3px] h-[12px]">
                        <span className="w-[4px] h-[4px] rounded-full bg-[#777]" />
                        <span className="w-[4px] h-[4px] rounded-full bg-[#777]" />
                        <span className="w-[4px] h-[4px] rounded-full bg-[#777]" />
                    </div>
                    <svg width="16" height="14" viewBox="0 0 16 14" fill="none" stroke="#999" className="ml-[21px]">
                        <rect x="0.5" y="0.5" width="15" height="13" />
                        <path d="M0.5 3h15M8 11V6M5.5 8L8 5.5 10.5 8" />
                    </svg>
                    <X size={16} strokeWidth={1} className="ml-[21px] text-[#999]" />
                </div>

                <div className="h-[982px] flex items-start pl-[28px]">
                    {/* paper */}
                    <div className="w-[1842px] h-[982px] bg-[#fff1cc] border border-[#c4c4c4] pt-[60px] pl-[119px]">
                        <div className="w-[1613px] h-[872px] bg-white flex flex-col">
                            <GreenHeader />
                            <RibbonBar />
                            <div className="h-[11px] bg-[#e6e6e6]" />
                            <FormulaBar />
                            <ColumnHeader />
                            <Sheet />
                            <BottomBars />
                        </div>
                    </div>
                    {/* page scroller */}
                    <div className="ml-[39px] mt-[155px] w-[11px] h-[63px] rounded-full border-[3px] border-[#777] bg-white flex items-end justify-center pb-[1px] shrink-0">
                        <div className="w-[4px] h-[38px] bg-[#f47a2e]" />
                    </div>
                </div>

                <div className="h-[9px] bg-[#d4d4d4] flex">
                    <div className="ml-[744px] w-[60px] bg-[#f5b27c]" />
                </div>
            </div>

            <CropMark className="left-[58px] top-[76px] border-r border-b" />
            <CropMark className="left-[1811px] top-[76px] border-l border-b" />
            <CropMark className="left-[58px] top-[980px] border-r border-t" />
            <CropMark className="left-[1811px] top-[978px] border-l border-t" />
            <div className="absolute left-[134px] top-[962px] font-['Liberation_Serif',serif] text-[20px] leading-[24px] text-[#222]">√</div>

            <Overlays />
        </div>
    );
}
